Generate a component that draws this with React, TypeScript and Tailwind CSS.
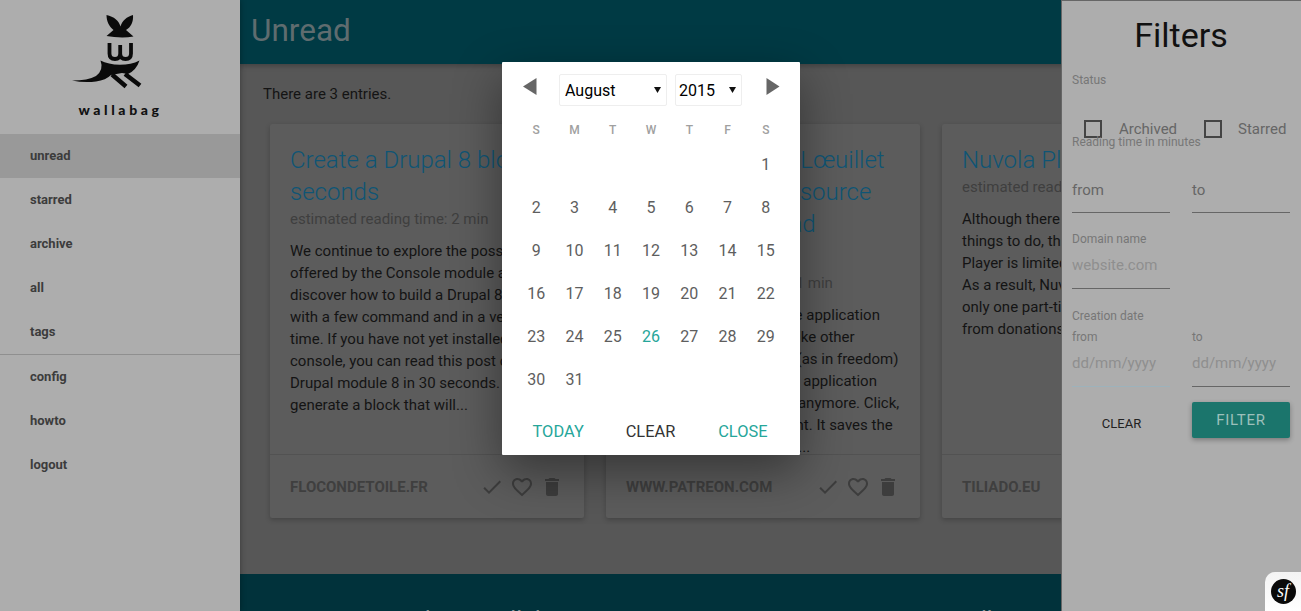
import { MdDone, MdFavoriteBorder, MdDelete } from "react-icons/md";

const nav1 = ["unread", "starred", "archive", "all", "tags"];
const nav2 = ["config", "howto", "logout"];

function Logo() {
  return (
    <svg width="120" height="80" viewBox="60 12 120 80" className="block">
      <path d="M106.5,15 C114,16.5 119,21 120.5,26.5 C122,21 127,16.5 133,15 C133.5,22 131,27 126,30 L133.5,36.5 C125,38 115,37.5 106.5,36 L113.5,30 C109,26.5 106.5,21 106.5,15Z" fill="#0a0a0a" />
      <path d="M109.5,43 V53.5 Q109.5,59 115,59 Q120.2,59 120.2,53.5 V45 M120.2,53.5 Q120.2,59 125.5,59 Q131,59 131,53.5 V43" fill="none" stroke="#0a0a0a" strokeWidth="3.8" />
      <path d="M100.5,60.5 Q108,64.5 120,64.8 Q131,64.8 139.5,60.5 Q136.5,70 128,74 L122,73 L111,75 Q106,80 96,81.5 Q84,83 72,80.5 Q88,80.5 96,76 Q104,70 100.5,60.5Z" fill="#0a0a0a" />
      <path d="M112,74.5 L126,86.5 M125,74 L140,85.5" fill="none" stroke="#0a0a0a" strokeWidth="4.4" />
    </svg>
  );
}

function CardFooter({ domain }: { domain: string }) {
  return (
    <div className="h-16 shrink-0 border-t border-[#525252] pl-5 pr-5 flex items-center justify-between">
      <span className="text-[15px] font-bold text-[#3f3f3f] uppercase pt-[1px]">{domain}</span>
      <div className="flex gap-[6px] text-[#3d3d3d]">
        <MdDone size={24} />
        <MdFavoriteBorder size={24} />
        <MdDelete size={24} />
      </div>
    </div>
  );
}

function Card({ title, time, lines, domain }: { title: string[]; time: string; lines: string[]; domain: string }) {
  return (
    <div className="w-[314px] h-[394px] shrink-0 bg-[#5c5c5c] rounded-[2px] shadow-[0_2px_5px_rgba(0,0,0,0.22)] flex flex-col">
      <div className="flex-1 pt-5 px-5 overflow-hidden whitespace-nowrap">
        <div className="text-[24px] leading-8 font-light text-[#0f5575]">
          {title.map((t) => (
            <div key={t}>{t}</div>
          ))}
        </div>
        <div className="text-[15px] leading-[22px] text-[#3f3f3f]">estimated reading time: {time}</div>
        <div className="text-[15px] leading-[22px] text-[#141414] mt-[10px]">
          {lines.map((l) => (
            <div key={l}>{l}</div>
          ))}
        </div>
      </div>
      <CardFooter domain={domain} />
    </div>
  );
}

const dayNames = ["S", "M", "T", "W", "T", "F", "S"];
const days: (number | null)[] = [null, null, null, null, null, null];
for (let i = 1; i <= 31; i++) days.push(i);

function Caret({ cls }: { cls: string }) {
  return (
    <svg width="7" height="6" viewBox="0 0 7 6" className={"absolute top-[25px] pointer-events-none " + cls}>
      <path d="M0 0 H7 L3.5 6Z" fill="#111" />
    </svg>
  );
}

function DatePicker() {
  return (
    <div className="absolute left-[502px] top-[62px] w-[298px] h-[393px] bg-white rounded-[1px] shadow-[0_16px_48px_rgba(0,0,0,0.42)] flex flex-col z-30">
      <div className="h-[59px] relative shrink-0">
        <svg width="14" height="17" viewBox="0 0 14 17" className="absolute left-[21px] top-[16px]">
          <path d="M13.5 0 V17 L0 8.5Z" fill="#666" />
        </svg>
        <select defaultValue="August" className="absolute left-[57px] top-3 w-[108px] h-[32px] border border-[#eee] rounded-[2px] bg-white text-[16px] text-black pl-[5px] pt-[2px] appearance-none">
          <option>July</option>
          <option>August</option>
          <option>September</option>
        </select>
        <Caret cls="left-[152px]" />
        <select defaultValue="2015" className="absolute left-[173px] top-3 w-[67px] h-[32px] border border-[#eee] rounded-[2px] bg-white text-[16px] text-black pl-[3px] pt-[2px] appearance-none">
          <option>2014</option>
          <option>2015</option>
          <option>2016</option>
        </select>
        <Caret cls="left-[227px]" />
        <svg width="14" height="17" viewBox="0 0 14 17" className="absolute left-[264px] top-[16px]">
          <path d="M0.5 0 V17 L13.5 8.5Z" fill="#666" />
        </svg>
      </div>
      <div className="mx-[15px] grid grid-cols-7 h-[16px] items-center text-[12px] font-medium text-[#a0a0a0] text-center">
        {dayNames.map((d, i) => (
          <div key={i}>{d}</div>
        ))}
      </div>
      <div className="mx-[15px] mt-[6px] grid grid-cols-7 auto-rows-[43px] h-[258px] text-[16px] text-[#5e5e5e] text-center">
        {days.map((d, i) => (
          <div key={i} className={"flex items-center justify-center " + (d === 26 ? "text-[#26a69a]" : "")}>
            {d}
          </div>
        ))}
      </div>
      <div className="flex-1 grid grid-cols-3 pl-[10px] pr-[11px] text-[16.4px] text-center items-center pt-[9px]">
        <span className="text-[#26a69a]">TODAY</span>
        <span className="text-[#333]">CLEAR</span>
        <span className="text-[#26a69a]">CLOSE</span>
      </div>
    </div>
  );
}

function Field({ text, line, h }: { text: string; line?: string; h: string }) {
  return <div className={"w-[98px] border-b flex items-center " + h + " " + (line ?? "border-[#666]")}>{text}</div>;
}

function Filters() {
  return (
    <aside className="absolute right-0 top-0 w-[240px] h-full bg-[#adadad] border-l border-t border-[#666] z-20 pl-[10px] pr-[11px] flex flex-col">
      <h4 className="text-[34px] leading-[44px] text-[#111] text-center pt-[12px] h-[56px] box-content">Filters</h4>
      <div className="text-[12px] leading-4 text-[#777] mt-[3px]">Status</div>
      <div className="h-[44px] mt-[12px] flex items-start">
        <div className="flex items-center h-[20px] mt-[19px]">
          <span className="w-[18px] h-[18px] border-2 border-[#444] ml-[12px]" />
          <span className="text-[15px] text-[#666] ml-[17px] w-[85px]">Archived</span>
          <span className="w-[18px] h-[18px] border-2 border-[#444]" />
          <span className="text-[15px] text-[#666] ml-[16px]">Starred</span>
        </div>
      </div>
      <div className="text-[12px] leading-4 text-[#777] -mt-[10px]">Reading time in minutes</div>
      <div className="flex justify-between text-[15px] text-[#666] mt-[17px]">
        <Field text="from" h="h-[46px] pt-[1px]" />
        <Field text="to" h="h-[46px] pt-[1px]" />
      </div>
      <div className="text-[12px] leading-4 text-[#777] mt-[18px]">Domain name</div>
      <div className="flex text-[15px] text-[#8f8f8f] -mt-[1px]">
        <Field text="website.com" h="h-[43px] pb-[4px]" />
      </div>
      <div className="text-[12px] leading-4 text-[#777] mt-[19px]">Creation date</div>
      <div className="flex justify-between text-[12px] leading-4 text-[#777] mt-[5px]">
        <span className="w-[98px]">from</span>
        <span className="w-[98px]">to</span>
      </div>
      <div className="flex justify-between text-[15px] text-[#8f8f8f] -mt-[1px]">
        <Field text="dd/mm/yyyy" line="border-[#9db2bb]" h="h-[43px] pb-[4px]" />
        <Field text="dd/mm/yyyy" h="h-[43px] pb-[4px]" />
      </div>
      <div className="flex justify-between mt-[15px]">
        <div className="w-[98px] h-[36px] flex items-center justify-center text-[13px] text-[#222] pt-[8px] pl-[1px]">CLEAR</div>
        <div className="w-[98px] h-[36px] flex items-center justify-center text-[15px] tracking-[0.7px] text-[#9cc0bb] bg-[#1b756c] rounded-[2px] shadow-[0_2px_5px_rgba(0,0,0,0.3)]">FILTER</div>
      </div>
    </aside>
  );
}

export default function App() {
  return (
    <div className="relative w-full h-[611px] overflow-hidden flex bg-[#575757] [font-family:Roboto,sans-serif]">
      <nav className="w-[240px] shrink-0 bg-[#adadad] flex flex-col relative z-10 shadow-[0_0_6px_rgba(0,0,0,0.35)]">
        <div className="h-[134px] shrink-0 flex flex-col items-center pt-[12px]">
          <Logo />
          <div className="mt-[9px] text-[14px] leading-[18px] font-black tracking-[3.6px] text-[#111] [font-family:Lato,sans-serif] pl-[1px]">wallabag</div>
        </div>
        {nav1.map((n) => (
          <div key={n} className={"h-[44px] flex items-center pl-[30px] text-[13px] font-bold text-[#3c3c3c] " + (n === "unread" ? "bg-[#999]" : "")}>{n}</div>
        ))}
        <div className="border-t border-[#8f8f8f]" />
        {nav2.map((n) => (
          <div key={n} className="h-[44px] flex items-center pl-[30px] text-[13px] font-bold text-[#3c3c3c]">{n}</div>
        ))}
      </nav>
      <main className="flex-1 min-w-0 flex flex-col overflow-hidden">
        <header className="h-16 shrink-0 bg-[#003a44] shadow-[0_2px_5px_rgba(0,0,0,0.25)] pl-[11px] pb-[3px] flex items-center text-[31.5px] font-normal text-[#5f6c6f] relative">Unread</header>
        <div className="h-[60px] shrink-0 pl-[23px] pt-[20px] text-[15px] leading-5 text-[#141414]">There are 3 entries.</div>
        <div className="flex gap-[22px] pl-[30px] shrink-0">
          <Card
            title={["Create a Drupal 8 block in 30", "seconds"]}
            time="2 min"
            domain="flocondetoile.fr"
            lines={[
              "We continue to explore the possibilities",
              "offered by the Console module and we",
              "discover how to build a Drupal 8 block",
              "with a few command and in a very short",
              "time. If you have not yet installed the",
              "console, you can read this post on",
              "Drupal module 8 in 30 seconds. We will",
              "generate a block that will...",
            ]}
          />
          <Card
            title={["Support Nicolas Lœuillet", "Wallabag - open source", "a neat tool to read", "articles"]}
            time="11 min"
            domain="www.patreon.com"
            lines={[
              "wallabag is a self hostable application",
              "for saving web pages. Unlike other",
              "services, wallabag is free (as in freedom)",
              "and open source. With the application",
              "you do not miss contents anymore. Click,",
              "save, read it when you want. It saves the",
              "content you select to read...",
            ]}
          />
          <Card
            title={["Nuvola Player"]}
            time="3 min"
            domain="tiliado.eu"
            lines={[
              "Although there are a lot of",
              "things to do, the development of Nuvola",
              "Player is limited by available resources.",
              "As a result, Nuvola Player has",
              "only one part-time developer and lives",
              "from donations.",
            ]}
          />
        </div>
        <div className="flex-1" />
        <footer className="h-[37px] shrink-0 bg-[#01323b] overflow-hidden pl-[172px] text-[24px] leading-8 pt-[30px] text-[#8a9699] flex whitespace-nowrap">
          <span className="w-[548px] shrink-0">about wallabag</span>
          <span>talk</span>
        </footer>
      </main>
      <DatePicker />
      <Filters />
      <div className="absolute right-0 bottom-0 w-[36px] h-[39px] bg-gradient-to-b from-[#f4f4f4] to-white rounded-tl-[10px] z-40 flex items-center justify-center">
        <span className="w-[25px] h-[25px] rounded-full bg-[#0a0a0a] text-white text-[18px] italic flex items-center justify-center [font-family:'Liberation_Serif',serif]">sf</span>
      </div>
    </div>
  );
}
